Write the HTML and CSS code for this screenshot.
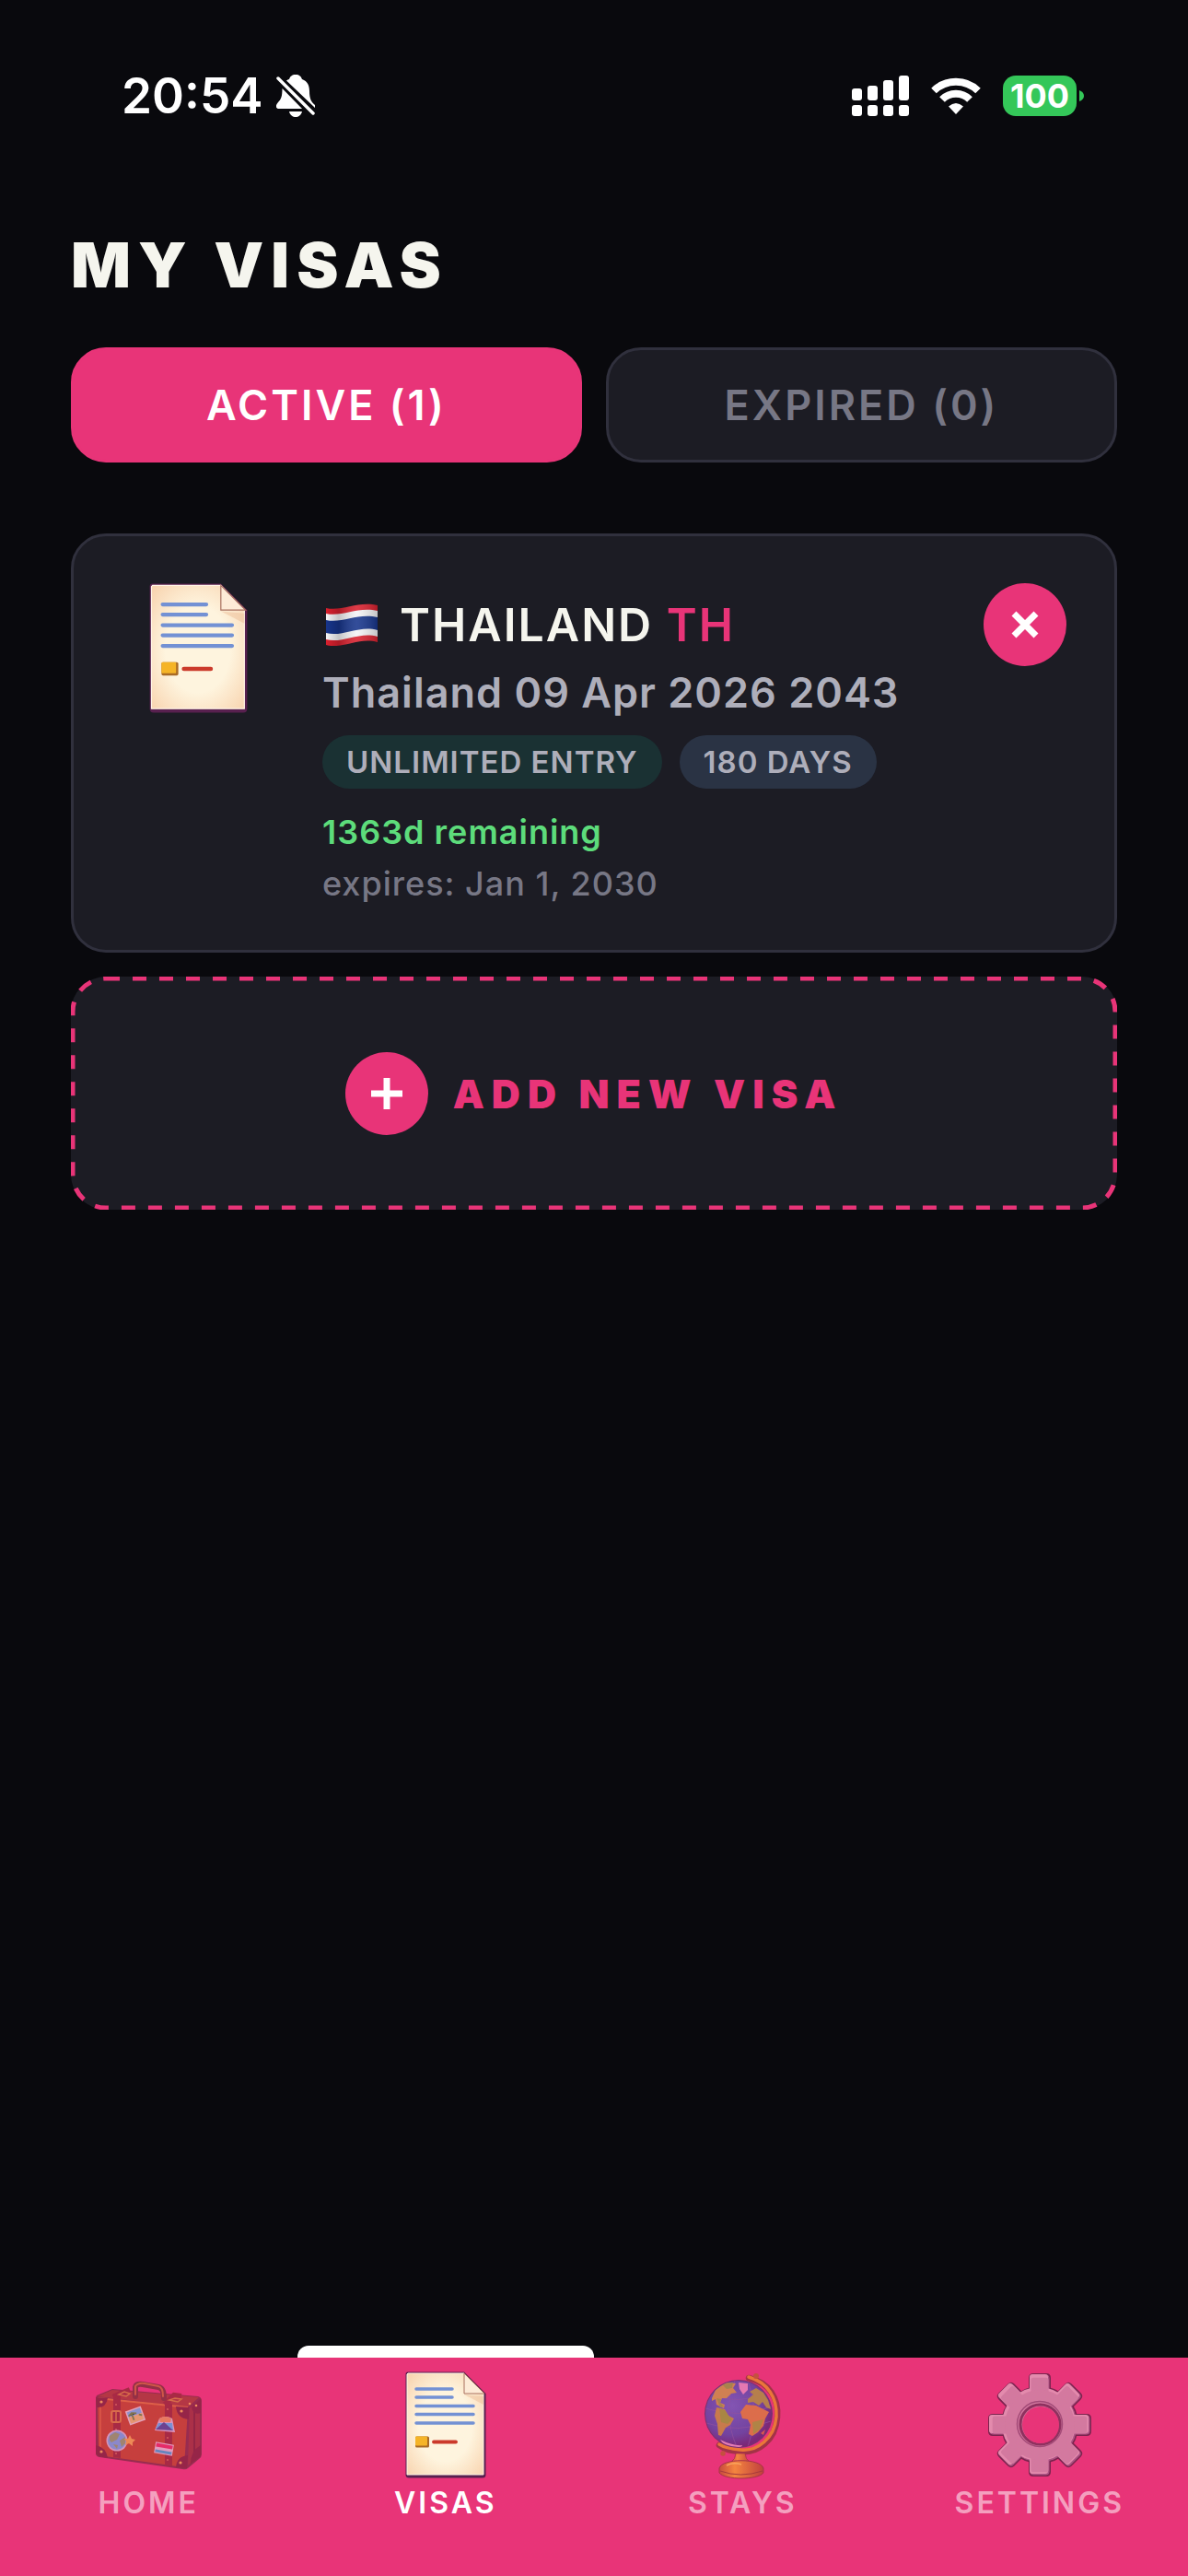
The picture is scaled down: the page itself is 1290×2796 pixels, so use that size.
FILE: index.html
```html
<!DOCTYPE html>
<html lang="en">
<head>
  <meta charset="utf-8">
  <meta name="viewport" content="width=device-width, initial-scale=1">
  <title>My Visas</title>
  <link rel="stylesheet" href="styles.css">
</head>
<body>
  <svg class="defs" aria-hidden="true">
    <defs>
      <radialGradient id="paper" cx="50%" cy="52%" r="70%">
        <stop offset="0.5" stop-color="#fef4de"/>
        <stop offset="1" stop-color="#f8d3ae"/>
      </radialGradient>
      <symbol id="document" viewBox="0 0 88 116">
        <path d="M3 0.500H64L87.500 24V112Q87.500 115.500 84 115.500H4Q0.500 115.500 0.500 112V3Q0.500 0.500 3 0.500Z" fill="#58204f"/>
        <path d="M3 2H64L85 24V112H2V3Z" fill="url(#paper)" stroke="#fff3e6" stroke-width="1"/>
        <path d="M64 25L85 27V36Z" fill="#e9b58d" opacity="0.4"/>
        <path d="M64 2V24H86Z" fill="#fdebd7" stroke="#a8705f" stroke-width="1"/>
        <path d="M12 19H51M12 28H51M12 37.500H74M12 46.500H74M12 56H74" fill="none" stroke="#7391d4" stroke-width="3.500" stroke-linecap="round"/>
        <rect x="11" y="70.500" width="15" height="12" rx="1.500" fill="#a96a24"/>
        <rect x="11" y="70.500" width="13" height="10" rx="1" fill="#f5b427"/>
        <path d="M31 76.500H55" stroke="#cb3a2b" stroke-width="3.800" stroke-linecap="round"/>
      </symbol>
    </defs>
  </svg>

  <header class="status">
    <div class="status-group">
      <time class="clock">20:54</time>
      <svg class="bell" viewBox="0 0 42 46" aria-label="Silent mode">
        <path d="M21 0C25 0 27 2 28 5C34 7 36 12 36 18C36 26 38 30 42 33V36L11 6.500C12 5.500 13 5 14 5C15 2 17 0 21 0Z" fill="#fff"/>
        <path d="M6.500 15L28 37H3C-1 37-1 33 2 30C5 27 6.500 24 6.500 15Z" fill="#fff"/>
        <path d="M14 40H28C27 44 24 46 21 46S15 44 14 40Z" fill="#fff"/>
        <path d="M2 4L40 42" stroke="#fff" stroke-width="3.500" stroke-linecap="round"/>
      </svg>
    </div>
    <div class="status-group status-right">
      <svg class="signal" viewBox="0 0 62 44" fill="#fff" aria-label="Cellular signal">
        <rect x="0" y="14" width="11" height="13" rx="3"/><rect x="17" y="11" width="11" height="16" rx="3"/>
        <rect x="34" y="5" width="11" height="22" rx="3"/><rect x="51" y="0" width="11" height="27" rx="3"/>
        <rect x="0" y="32" width="11" height="12" rx="3"/><rect x="17" y="32" width="11" height="12" rx="3"/>
        <rect x="34" y="32" width="11" height="12" rx="3"/><rect x="51" y="32" width="11" height="12" rx="3"/>
      </svg>
      <svg class="wifi" viewBox="0 0 54 40" aria-label="Wi-Fi">
        <g fill="none" stroke="#fff" stroke-width="8">
          <path d="M3 14.500A34.500 34.500 0 0 1 51 14.500"/>
          <path d="M12 24A21 21 0 0 1 42 24"/>
        </g>
        <path d="M27 40L19 31.500Q27 24.500 35 31.500Z" fill="#fff"/>
      </svg>
      <div class="battery">
        <span class="battery-level">100</span>
        <svg class="battery-cap" viewBox="0 0 5 12"><path d="M0 0Q5 2 5 6T0 12Z" fill="#34c759"/></svg>
      </div>
    </div>
  </header>

  <main class="page">
    <h1 class="title">MY VISAS</h1>
    <div class="tabs">
      <button class="tab tab-active" type="button">ACTIVE (1)</button>
      <button class="tab" type="button">EXPIRED (0)</button>
    </div>

    <article class="card">
      <div class="card-icon"><svg class="document" aria-hidden="true"><use href="#document"/></svg></div>
      <div class="card-body">
        <h2 class="country">
          <svg class="flag" viewBox="0 0 56 46" aria-label="Flag of Thailand">
            <defs>
              <clipPath id="wave"><path d="M0 5C18 9 34-3 56 2V42C36 36 18 50 0 45Z"/></clipPath>
              <linearGradient id="sheen">
                <stop offset="0" stop-color="#000" stop-opacity="0"/>
                <stop offset="0.250" stop-color="#000" stop-opacity="0.200"/>
                <stop offset="0.600" stop-color="#fff" stop-opacity="0.120"/>
                <stop offset="1" stop-color="#000" stop-opacity="0.200"/>
              </linearGradient>
            </defs>
            <g clip-path="url(#wave)">
              <rect width="56" height="46" fill="#d9202e"/>
              <path d="M0 11C18 15 34 3 56 8V36C36 30 18 44 0 39Z" fill="#f4f4f6"/>
              <path d="M0 18C18 22 34 10 56 15V29C36 23 18 37 0 32Z" fill="#17358c"/>
              <rect width="56" height="46" fill="url(#sheen)"/>
            </g>
          </svg>
          <span>THAILAND <span class="code">TH</span></span>
        </h2>
        <p class="visa-name">Thailand 09 Apr 2026 2043</p>
        <div class="badges">
          <span class="badge badge-entry">UNLIMITED ENTRY</span>
          <span class="badge badge-days">180 DAYS</span>
        </div>
        <p class="remaining">1363d remaining</p>
        <p class="expires">expires: Jan 1, 2030</p>
      </div>
      <button class="round" type="button" aria-label="Remove visa">
        <svg class="cross" viewBox="0 0 30 30"><path d="M3 3L27 27M27 3L3 27" stroke="#fff" stroke-width="7"/></svg>
      </button>
    </article>

    <button class="add" type="button">
      <svg class="add-outline" aria-hidden="true"><rect class="add-dashes" x="2" y="2" rx="36"/></svg>
      <span class="round">
        <svg class="plus" viewBox="0 0 34 34"><path d="M17 0V34M0 17H34" stroke="#fff" stroke-width="7"/></svg>
      </span>
      <span>ADD NEW VISA</span>
    </button>
  </main>

  <nav class="nav" aria-label="Main">
    <a class="nav-item" href="#home">
      <svg class="nav-icon" viewBox="0 0 120 120" aria-hidden="true">
        <path d="M4 28L21 21L114 29Q118 30 118 34V92Q118 95 115 97L103 107Q101 109 97 108L7 95Q3 94 3 91V33Q3 29 4 28Z" fill="#982c50"/>
        <path d="M5 31L103 42L99 106L6 93Z" fill="#c63f3d"/>
        <path d="M5 29L21 22L115 30L103 41Z" fill="#b43745"/>
        <path d="M105 42L116 33V92L103 104Z" fill="#ab3048"/>
        <path d="M110 38V98" stroke="#922545" stroke-width="2"/>
        <path d="M5 31L103 41" stroke="#de6048" stroke-width="2"/>
        <path d="M8 33V92" stroke="#dd5a49" stroke-width="1.500"/>
        <path d="M22 26L30 27V96L22 95ZM78 36L86 37V105L78 104Z" fill="#a82a45"/>
        <path d="M22 30L30 26L40 22M78 38L88 28L96 29" fill="none" stroke="#a82a45" stroke-width="6"/>
        <path d="M28 27L34 24L40 26L36 29ZM83 33L89 31L96 32L92 35Z" fill="none" stroke="#d56b4a" stroke-width="1.500"/>
        <path d="M46 29V19Q47 15 54 16L71 19Q77 20 77 31" fill="none" stroke="#943046" stroke-width="6" stroke-linecap="round"/>
        <path d="M46 27V18Q49 14 56 15L71 18Q76 19 76 29" fill="none" stroke="#cf5748" stroke-width="2" stroke-linecap="round"/>
        <path d="M3 30L16 31Q14 42 4 41ZM90 40L104 41V54Q91 53 90 40ZM3 82Q14 84 16 96L6 94L3 91ZM90 106Q91 94 103 93L102 107ZM107 41Q109 50 117 47V31ZM117 82Q106 88 106 102L117 94Z" fill="#962548"/>
        <g fill="#ee8c5d"><circle cx="9" cy="35" r="1.600"/><circle cx="96" cy="45" r="1.600"/><circle cx="9" cy="89" r="1.600"/><circle cx="95" cy="101" r="1.600"/><circle cx="105" cy="37" r="1.300"/><circle cx="112" cy="39" r="1.300"/></g>
        <g fill="#d0575a"><circle cx="25" cy="38" r="1.100"/><circle cx="25" cy="65" r="1.100"/><circle cx="25" cy="91" r="1.100"/><circle cx="81" cy="43" r="1.100"/><circle cx="81" cy="74" r="1.100"/><circle cx="81" cy="98" r="1.100"/></g>
        <rect x="20" y="45" width="10" height="12" rx="2" fill="none" stroke="#d96b4c" stroke-width="2"/>
        <path d="M25 45V57" stroke="#d96b4c" stroke-width="1.500"/>
        <g transform="rotate(-20 46 50)"><rect x="37" y="42" width="18" height="16" fill="#e2a1b8"/><rect x="38.500" y="43.500" width="15" height="6" fill="#8b91cd"/><rect x="38.500" y="49.500" width="15" height="7" fill="#e59672"/><path d="M43 54V47M39 48L43 46L48 48M50 50L53 52" stroke="#80734f" stroke-width="1.800"/></g>
        <path d="M72 53Q79 49 86 53L89 68L67 66Z" fill="#da92bb"/><path d="M71 58H86L87 66L68 64Z" fill="#7890d2"/><path d="M68 65L77 57L87 66Z" fill="#6d4290"/><path d="M72 53Q79 49 85 53L84 57H73Z" fill="#e87961"/>
        <circle cx="26" cy="77" r="11.500" fill="#d395bb"/><circle cx="26" cy="77" r="10" fill="#8b88cb"/>
        <path d="M18 72L24 68L29 70L26 76L20 79L18 77ZM29 77L35 73L35 80L31 84ZM22 81L27 82L26 86Z" fill="#a08470"/>
        <path d="M40 71L42 75L46 76L43 79L43 83L39 80L35 82L36 78L34 75L38 75Z" fill="#ec8955"/>
        <g transform="rotate(10 77 86)"><rect x="67" y="80" width="20" height="12" fill="#e39bbd"/><rect x="68" y="81" width="18" height="4" fill="#e52b68"/><rect x="68" y="88" width="18" height="3" fill="#6685bd"/></g>
      </svg>
      <span>HOME</span>
    </a>
    <a class="nav-item nav-current" href="#visas" aria-current="page">
      <svg class="nav-icon" aria-hidden="true"><use href="#document" x="0" y="2" width="120" height="116"/></svg>
      <span>VISAS</span>
    </a>
    <a class="nav-item" href="#stays">
      <svg class="nav-icon" viewBox="0 0 120 120" aria-hidden="true">
        <defs>
          <radialGradient id="ocean" cx="40%" cy="38%" r="62%"><stop offset="0" stop-color="#8355b3"/><stop offset="0.700" stop-color="#73439f"/><stop offset="1" stop-color="#7c2877"/></radialGradient>
          <linearGradient id="brass"><stop offset="0" stop-color="#c84a3e"/><stop offset="0.350" stop-color="#f4853f"/><stop offset="1" stop-color="#c0403e"/></linearGradient>
          <clipPath id="ball"><circle cx="56" cy="48" r="36"/></clipPath>
        </defs>
        <path d="M67 9C89 14 100 31 98 52C96 77 77 91 58 89C48 88 41 87 35 82" fill="none" stroke="#a33347" stroke-width="6.500" stroke-linecap="round"/>
        <path d="M67 8C88 14 98 31 97 51C95 75 76 89 58 87C48 86 41 85 35 81" fill="none" stroke="#ea7639" stroke-width="3.500" stroke-linecap="round"/>
        <circle cx="75" cy="7" r="3" fill="#c45040"/><circle cx="39" cy="91" r="2.800" fill="#c45040"/>
        <circle cx="56" cy="48" r="37" fill="#79326f"/>
        <circle cx="56" cy="48" r="36" fill="url(#ocean)"/>
        <g clip-path="url(#ball)">
          <path d="M20 42Q56 54 92 40M21 58Q56 70 91 56M52 12Q38 46 54 84M66 12Q80 46 66 84M28 28Q56 38 84 26" fill="none" stroke="#91529f" stroke-width="0.700"/>
          <path d="M27 31L31 22L42 14L53 15L50 20L54 25L48 26L43 31L38 31L36 36L41 38L40 42L32 38L31 32L27 34Z" fill="#d08052"/>
          <path d="M38 16L50 14L49 20L43 21ZM32 31L37 32L36 36L40 40L36 41Z" fill="#a8834c"/>
          <path d="M56 14L66 15L66 22L61 27L57 21Z" fill="#e578b1"/>
          <path d="M32 41L41 43L45 50L51 53L47 60L42 63L37 72L34 71L33 59L30 50Z" fill="#c87a4c"/>
          <path d="M35 42L41 44L46 51L49 54L44 59L37 57Z" fill="#a98644"/>
          <path d="M66 32L72 27L68 24L75 20L83 25L88 33L91 43L86 41L82 35L78 39L72 35L66 36Z" fill="#b57f4c"/>
          <path d="M58 46L64 38L75 39L81 42L89 46L85 53L83 61L77 68L71 72L67 70L69 60L66 54L60 53Z" fill="#dc6d4b"/>
          <path d="M71 57L83 54L79 65L72 70Z" fill="#b08446"/>
          <path d="M80 69L85 65L83 71Z" fill="#d7594f"/>
          <path d="M36 76Q50 83 60 82L58 86L42 84Z" fill="#e47db4"/>
        </g>
        <path d="M53 91H63Q63 97 69 101H47Q53 97 53 91Z" fill="url(#brass)" stroke="#a83249" stroke-width="0.800"/>
        <path d="M35 107C38 96 80 96 83 107V112C77 120 41 120 35 112Z" fill="url(#brass)" stroke="#a83249" stroke-width="1"/>
        <path d="M36 110Q58 118 82 110" fill="none" stroke="#a63b3d" stroke-width="1"/>
        <path d="M43 104Q51 100 59 103" fill="none" stroke="#f9a45c" stroke-width="1.500"/>
      </svg>
      <span>STAYS</span>
    </a>
    <a class="nav-item" href="#settings">
      <svg class="nav-icon" viewBox="0 0 120 120" aria-hidden="true">
        <defs>
          <g id="teeth">
            <path id="tooth-pair" d="M50 26V9Q50 6 53 6H67Q70 6 70 9V26L74 60L70 94V111Q70 114 67 114H53Q50 114 50 111V94L46 60Z"/>
            <use href="#tooth-pair" transform="rotate(45 60 60)"/>
            <use href="#tooth-pair" transform="rotate(90 60 60)"/>
            <use href="#tooth-pair" transform="rotate(135 60 60)"/>
            <circle cx="60" cy="60" r="40"/>
          </g>
          <mask id="bore"><rect width="120" height="120" fill="#fff"/><circle cx="61" cy="60" r="20" fill="#000"/></mask>
        </defs>
        <g mask="url(#bore)">
          <use href="#teeth" fill="#7c244f" stroke="#7c244f" stroke-width="4"/>
          <use href="#teeth" fill="#ad5485" stroke="#ad5485" stroke-width="1"/>
          <g transform="translate(-1 -1)"><use href="#teeth" fill="#e38bad"/></g>
          <g transform="translate(3 3) scale(0.950)"><use href="#teeth" fill="#d3799f"/></g>
          <circle cx="60" cy="59" r="24.500" fill="none" stroke="#a34b78" stroke-width="1.500"/>
          <circle cx="60.500" cy="59.500" r="21.500" fill="none" stroke="#8e315f" stroke-width="3"/>
        </g>
      </svg>
      <span>SETTINGS</span>
    </a>
  </nav>
</body>
</html>
```
FILE: styles.css
```css
* {
  box-sizing: border-box;
}

body {
  margin: 0;
  min-height: 100vh;
  display: flex;
  flex-direction: column;
  background: #09090d;
  color: #f5f5ee;
  font-family: Inter, "Liberation Sans", sans-serif;
}

h1, h2, p {
  margin: 0;
}

button {
  font: inherit;
  border: 0;
  padding: 0;
}

.defs {
  position: absolute;
  width: 0;
  height: 0;
}

/* Status bar */

.status {
  display: flex;
  align-items: center;
  justify-content: space-between;
  height: 208px;
  padding: 0 113px 0 132px;
  color: #fff;
}

.status-group {
  display: flex;
  align-items: center;
  gap: 14px;
}

.status-right {
  gap: 24px;
}

.clock {
  font-size: 53px;
  font-weight: 600;
}

.bell {
  width: 42px;
  height: 46px;
}

.signal {
  width: 62px;
  height: 44px;
}

.wifi {
  width: 54px;
  height: 40px;
}

.battery {
  display: flex;
  align-items: center;
  gap: 3px;
}

.battery-level {
  width: 80px;
  border-radius: 14px;
  background: #34c759;
  font-size: 36px;
  font-weight: 700;
  line-height: 44px;
  text-align: center;
}

.battery-cap {
  width: 5px;
  height: 12px;
}

/* Page */

.page {
  display: flex;
  flex-direction: column;
  padding: 39px 77px 77px;
}

.title {
  font-size: 68px;
  font-weight: 900;
  line-height: 80px;
  letter-spacing: 8px;
}

.tabs {
  display: grid;
  grid-template-columns: 1fr 1fr;
  gap: 26px;
  margin: 50px 0 77px;
}

.tab {
  height: 125px;
  border: 3px solid #30303d;
  border-radius: 38px;
  background: #1c1c24;
  color: #777785;
  font-size: 45px;
  font-weight: 600;
  letter-spacing: 3px;
}

.tab-active {
  border-color: #e83478;
  background: #e83478;
  color: #fff;
}

.card {
  display: flex;
  align-items: flex-start;
  padding: 51px 52px 44px;
  border: 3px solid #30303d;
  border-radius: 38px;
  background: #1c1c24;
}

.card-icon {
  display: flex;
  justify-content: center;
  width: 167px;
  margin-right: 51px;
}

.document {
  width: 107px;
  height: 141px;
}

.card-body {
  flex: 1;
}

.country {
  display: flex;
  align-items: center;
  gap: 24px;
  padding-left: 4px;
  font-size: 50px;
  font-weight: 600;
  line-height: 90px;
  letter-spacing: 2px;
}

.flag {
  width: 56px;
  height: 46px;
}

.code {
  color: #e83478;
}

.visa-name {
  color: #aeaeba;
  font-size: 45px;
  font-weight: 600;
  line-height: 58px;
  letter-spacing: 1px;
}

.badges {
  display: flex;
  gap: 19px;
  margin: 17px 0 19px;
}

.badge {
  padding: 0 26px;
  border-radius: 29px;
  color: #aeaeba;
  font-size: 33px;
  font-weight: 600;
  line-height: 58px;
  letter-spacing: 1px;
}

.badge-entry {
  background: #1a3133;
}

.badge-days {
  background: #2a3344;
}

.remaining,
.expires {
  font-size: 36px;
  line-height: 56px;
  letter-spacing: 1px;
}

.remaining {
  color: #5ddc7b;
  font-weight: 600;
}

.expires {
  color: #777785;
  font-weight: 500;
}

.round {
  display: flex;
  align-items: center;
  justify-content: center;
  width: 90px;
  height: 90px;
  border-radius: 50%;
  background: #e83478;
}

.cross {
  width: 30px;
  height: 30px;
}

.plus {
  width: 34px;
  height: 34px;
}

.add {
  position: relative;
  display: flex;
  align-items: center;
  justify-content: center;
  gap: 27px;
  height: 253px;
  margin-top: 26px;
  border-radius: 38px;
  background: #1c1c24;
  color: #e83478;
  font-size: 43px;
  font-weight: 900;
  letter-spacing: 8px;
}

.add-outline {
  position: absolute;
  inset: 0;
  width: 100%;
  height: 100%;
}

.add-dashes {
  width: calc(100% - 4px);
  height: calc(100% - 4px);
  fill: none;
  stroke: #e83478;
  stroke-width: 5px;
  stroke-dasharray: 15 14;
}

/* Bottom navigation */

.nav {
  display: grid;
  grid-template-columns: repeat(4, 1fr);
  height: 237px;
  margin-top: auto;
  background: #e83478;
}

.nav-item {
  position: relative;
  display: flex;
  flex-direction: column;
  align-items: center;
  gap: 4px;
  padding-top: 13px;
  color: rgba(255, 255, 255, 0.55);
  font-size: 32px;
  font-weight: 600;
  line-height: 42px;
  letter-spacing: 3px;
  text-decoration: none;
}

.nav-current {
  color: #fff;
}

.nav-current::before {
  content: "";
  position: absolute;
  bottom: 100%;
  left: 0;
  width: 100%;
  height: 13px;
  border-radius: 12px 12px 0 0;
  background: #fff;
}

.nav-icon {
  width: 120px;
  height: 120px;
}
```
